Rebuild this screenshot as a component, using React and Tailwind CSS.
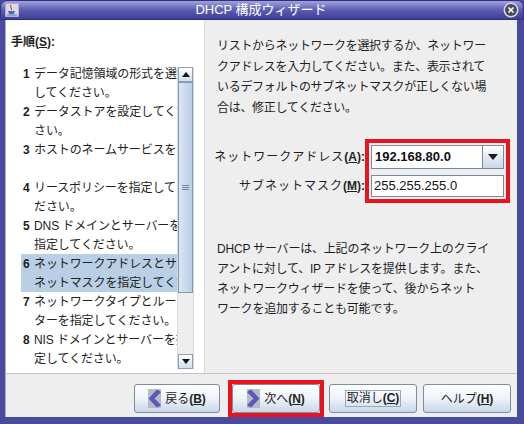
import React from "react";

const steps = [
  ["1", "データ記憶領域の形式を選択", "してください。"],
  ["2", "データストアを設定してくだ", "さい。"],
  ["3", "ホストのネームサービスを指定", ""],
  ["4", "リースポリシーを指定してく", "ださい。"],
  ["5", "DNS ドメインとサーバーを", "指定してください。"],
  ["6", "ネットワークアドレスとサブ", "ネットマスクを指定してくだ"],
  ["7", "ネットワークタイプとルー", "ターを指定してください。"],
  ["8", "NIS ドメインとサーバーを指", "定してください。"],
];

const Mnemonic = ({ label, letter }) => (
  <span>
    {label}
    <span className="font-bold">
      (<span className="underline">{letter}</span>)
    </span>
  </span>
);

const Chevron = ({ left }) => (
  <svg width="13" height="19" viewBox="0 0 13 19" className="shrink-0">
    <rect x="0" y="0" width="13" height="19" fill="#b9b9c2" />
    {left ? (
      <polygon points="9,1 12.5,3 6,9.5 12.5,16 9,18 1,9.5" fill="#5a58c8" stroke="#3c3a9c" strokeWidth="0.6" />
    ) : (
      <polygon points="4,1 0.5,3 7,9.5 0.5,16 4,18 12,9.5" fill="#5a58c8" stroke="#3c3a9c" strokeWidth="0.6" />
    )}
  </svg>
);

const Button = ({ children, width = "w-[88px]" }) => (
  <button className={`${width} h-[29px] flex items-center justify-center gap-[4px] rounded-[3px] border border-[#7d8ca3] bg-linear-to-b from-[#ffffff] via-[#eef3f9] to-[#c9d7e9] text-[12px] text-[#1e1e1e]`}>
    {children}
  </button>
);

const ArrowBox = ({ up }) => (
  <div className="h-[15px] flex items-center justify-center border border-[#8da0bb] bg-linear-to-b from-[#ffffff] to-[#d3deec]">
    <svg width="8" height="5" viewBox="0 0 8 5">
      {up ? <polygon points="0,5 4,0 8,5" fill="#111" /> : <polygon points="0,0 8,0 4,5" fill="#111" />}
    </svg>
  </div>
);

export default function App() {
  return (
    <div className="w-[524px] h-[424px] bg-[#4a4a9e] flex flex-col overflow-hidden font-['Liberation_Sans','Noto_Sans_CJK_JP',sans-serif] text-[12px] text-[#1e1e1e]">
      {/* title bar */}
      <div className="h-[20px] shrink-0 flex items-center px-[4px] rounded-t-[7px] border border-[#2f2f7c] bg-linear-to-b from-[#a2a2dc] via-[#5c5cb2] to-[#3e3e96]">
        <svg width="14" height="14" viewBox="0 0 14 14" className="shrink-0">
          <rect x="0" y="0" width="14" height="14" fill="#d9d9e6" stroke="#8a8ab8" />
          <path d="M6 2 C4 4 8 5 6 7" stroke="#d0502a" strokeWidth="1.2" fill="none" />
          <path d="M3 8 L10 8 L9 11 L4 11 Z" fill="#4a6ab0" />
          <path d="M2 12 L12 12" stroke="#4a6ab0" strokeWidth="1" />
        </svg>
        <div className="flex-1 text-center text-white text-[13px] leading-[18px]">DHCP 構成ウィザード</div>
        <svg width="16" height="16" viewBox="0 0 16 16" className="shrink-0">
          <circle cx="8" cy="8" r="7.5" fill="#d8d8e8" />
          <circle cx="8" cy="8" r="6" fill="#4a4a5a" />
          <path d="M5.5 5.5 L10.5 10.5 M10.5 5.5 L5.5 10.5" stroke="#fff" strokeWidth="1.6" />
        </svg>
      </div>

      <div className="flex-1 flex flex-col ml-[5px] mr-[7px] mb-[7px] bg-[#eeeeee] border-l border-[#a9a9d8]">
        <div className="flex h-[353px] shrink-0">
          {/* steps panel */}
          <div className="w-[198px] bg-white flex flex-col">
            <div className="h-[44px] pt-[14px] pl-[5px] leading-[16px] font-bold">
              手順(<span className="underline">S</span>):
            </div>
            <div className="flex">
              <div className="ml-[15px] w-[156px] overflow-hidden">
                {steps.map(([n, a, b]) => (
                  <div
                    key={n}
                    className={`h-[38px] flex flex-col whitespace-nowrap leading-[19px] tracking-[-0.1px] ${n === "6" ? "bg-[#b8cfe5]" : ""}`}
                  >
                    <div className="flex pt-[1px]">
                      <span className="w-[13px] pl-[2px] shrink-0 font-bold">{n}</span>
                      <span>{a}</span>
                    </div>
                    <div className="pl-[13px]">{b}</div>
                  </div>
                ))}
              </div>
              <div className="w-[17px] h-[302px] mt-[3px] flex flex-col bg-[#eeeeee] border-x border-[#d8d8d8]">
                <ArrowBox up />
                <div className="h-[211px] flex items-center justify-center border border-[#7f98bb] bg-linear-to-r from-[#dbe6f3] to-[#b9cde6]">
                  <div className="w-[7px] flex flex-col gap-[1px]">
                    <div className="h-[1px] bg-[#6e86a8]" />
                    <div className="h-[1px] bg-[#6e86a8]" />
                    <div className="h-[1px] bg-[#6e86a8]" />
                  </div>
                </div>
                <div className="flex-1" />
                <ArrowBox />
              </div>
            </div>
          </div>

          {/* content panel */}
          <div className="flex-1 flex flex-col pl-[12px] border-l border-[#dcdcdc]">
            <div className="pt-[16px] leading-[20.5px] whitespace-nowrap tracking-[-0.3px]">
              <div>リストからネットワークを選択するか、ネットワー</div>
              <div>クアドレスを入力してください。また、表示されて</div>
              <div>いるデフォルトのサブネットマスクが正しくない場</div>
              <div>合は、修正してください。</div>
            </div>

            <div className="flex mt-[21px]">
              <div className="w-[148px] flex flex-col items-end pt-[6px] whitespace-nowrap font-bold">
                <div className="h-[24px] flex items-center">
                  <span className="font-normal tracking-[1px]">ネットワークアドレス</span>
                  (<span className="underline">A</span>):
                </div>
                <div className="h-[22px] mt-[6px] flex items-center">
                  <span className="font-normal tracking-[1px]">サブネットマスク</span>
                  (<span className="underline">M</span>):
                </div>
              </div>
              <div className="w-[145px] border-[4px] border-[#e8141e] p-[2px] flex flex-col gap-[6px]">
                <div className="flex h-[24px]">
                  <div className="flex-1 bg-white border border-[#7a8a9c] flex items-center pl-[3px] text-[13px] font-bold text-[#111]">
                    192.168.80.0
                  </div>
                  <div className="w-[21px] flex items-center justify-center border border-[#7a8a9c] border-l-0 bg-linear-to-b from-[#ffffff] to-[#c9d7e9]">
                    <svg width="10" height="6" viewBox="0 0 10 6">
                      <polygon points="0,0 10,0 5,6" fill="#1a1a2a" />
                    </svg>
                  </div>
                </div>
                <div className="h-[22px] bg-white border border-[#7a8a9c] flex items-center pl-[2px] text-[13px] text-[#111]">
                  255.255.255.0
                </div>
              </div>
            </div>

            <div className="mt-[36px] leading-[20px] whitespace-nowrap tracking-[-0.2px]">
              <div>DHCP サーバーは、上記のネットワーク上のクライ</div>
              <div>アントに対して、IP アドレスを提供します。また、</div>
              <div>ネットワークウィザードを使って、後からネット</div>
              <div>ワークを追加することも可能です。</div>
            </div>
          </div>
        </div>

        {/* button bar */}
        <div className="flex-1 flex items-start justify-end pt-[6px] pr-[6px] border-t border-[#c4c4c4]">
          <div className="mt-[4px]">
            <Button width="w-[86px]">
              <Chevron left />
              <Mnemonic label="戻る" letter="B" />
            </Button>
          </div>
          <div className="ml-[8px] border-[4px] border-[#e8141e]">
            <Button>
              <Chevron />
              <Mnemonic label="次へ" letter="N" />
            </Button>
          </div>
          <div className="ml-[5px] mt-[4px]">
            <Button>
              <span className="border border-[#9aa6ba] px-[1px] leading-[15px]">
                <Mnemonic label="取消し" letter="C" />
              </span>
            </Button>
          </div>
          <div className="ml-[6px] mt-[4px]">
            <Button>
              <Mnemonic label="ヘルプ" letter="H" />
            </Button>
          </div>
        </div>
      </div>
    </div>
  );
}
